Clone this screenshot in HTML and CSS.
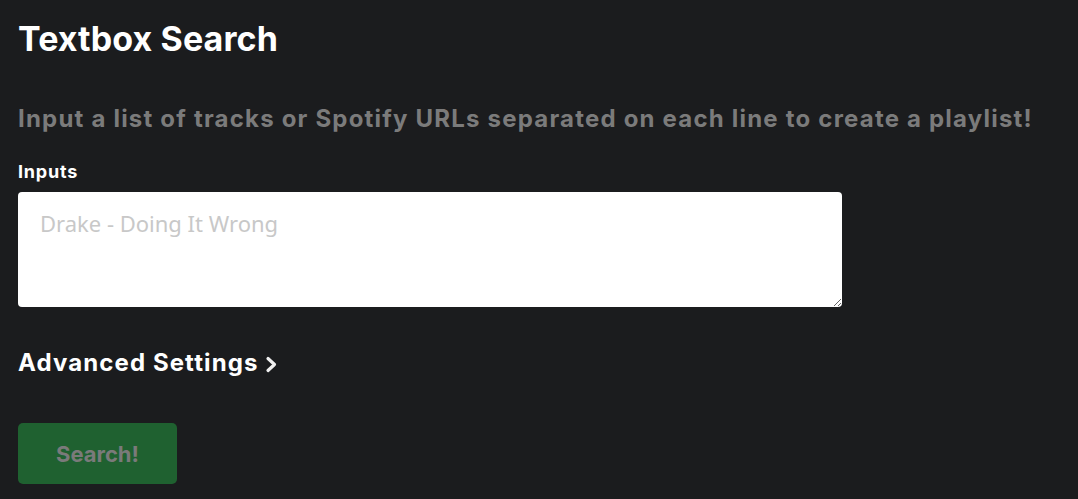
FILE: index.html
```html
<!DOCTYPE html>
<html>
<head>
<meta charset="utf-8">
<link rel="stylesheet" href="styles.css">
</head>
<body>
<main class="page">
  <h1 class="title">Textbox Search</h1>
  <h2 class="subtitle">Input a list of tracks or Spotify URLs separated on each line to create a playlist!</h2>
  <label class="label" for="inputs">Inputs</label>
  <textarea id="inputs" class="inputs" placeholder="Drake - Doing It Wrong"></textarea>
  <div class="advanced">
    <span>Advanced Settings</span>
    <svg class="chev" width="13" height="17" viewBox="0 0 13 17"><path d="M3 2.5 L9.5 8.5 L3 14.5" fill="none" stroke="#f0f0f0" stroke-width="3.2" stroke-linecap="round" stroke-linejoin="round"/></svg>
  </div>
  <button class="search" disabled>Search!</button>
</main>
</body>
</html>
```
FILE: styles.css
```css
html, body {
  margin: 0;
  padding: 0;
  background: #1b1c1e;
}
.page {
  padding: 18px 18px 0 18px;
  display: flex;
  flex-direction: column;
  align-items: flex-start;
  font-family: Inter, "Liberation Sans", sans-serif;
}
.title {
  margin: 0;
  font-size: 34px;
  font-weight: 700;
  color: #fff;
  line-height: 42px;
  letter-spacing: 0.1px;
}
.subtitle {
  margin: 43px 0 0 0;
  font-size: 24px;
  font-weight: 700;
  color: #7b7b7b;
  line-height: 32px;
  letter-spacing: 1.2px;
}
.label {
  margin-top: 26px;
  font-size: 18px;
  font-weight: 700;
  color: #fff;
  line-height: 22px;
  letter-spacing: 0.8px;
}
.inputs {
  margin-top: 9px;
  width: 824px;
  height: 115px;
  box-sizing: border-box;
  border: none;
  border-radius: 4px;
  background: #fff;
  padding: 16px 22px;
  font-family: "Noto Sans", sans-serif;
  font-size: 22px;
  resize: vertical;
  outline: none;
}
.inputs::placeholder {
  color: #c8c8c8;
}
.advanced {
  margin-top: 40px;
  display: flex;
  align-items: center;
  gap: 6px;
  font-size: 24px;
  font-weight: 700;
  color: #fff;
  line-height: 32px;
  letter-spacing: 1.1px;
}
.chev {
  margin-top: 3px;
}
.search {
  margin-top: 44px;
  width: 159px;
  height: 61px;
  border: none;
  border-radius: 5px;
  background: #1f6130;
  color: #7a7a7a;
  font-family: Inter, "Liberation Sans", sans-serif;
  font-size: 22px;
  font-weight: 700;
}
```
